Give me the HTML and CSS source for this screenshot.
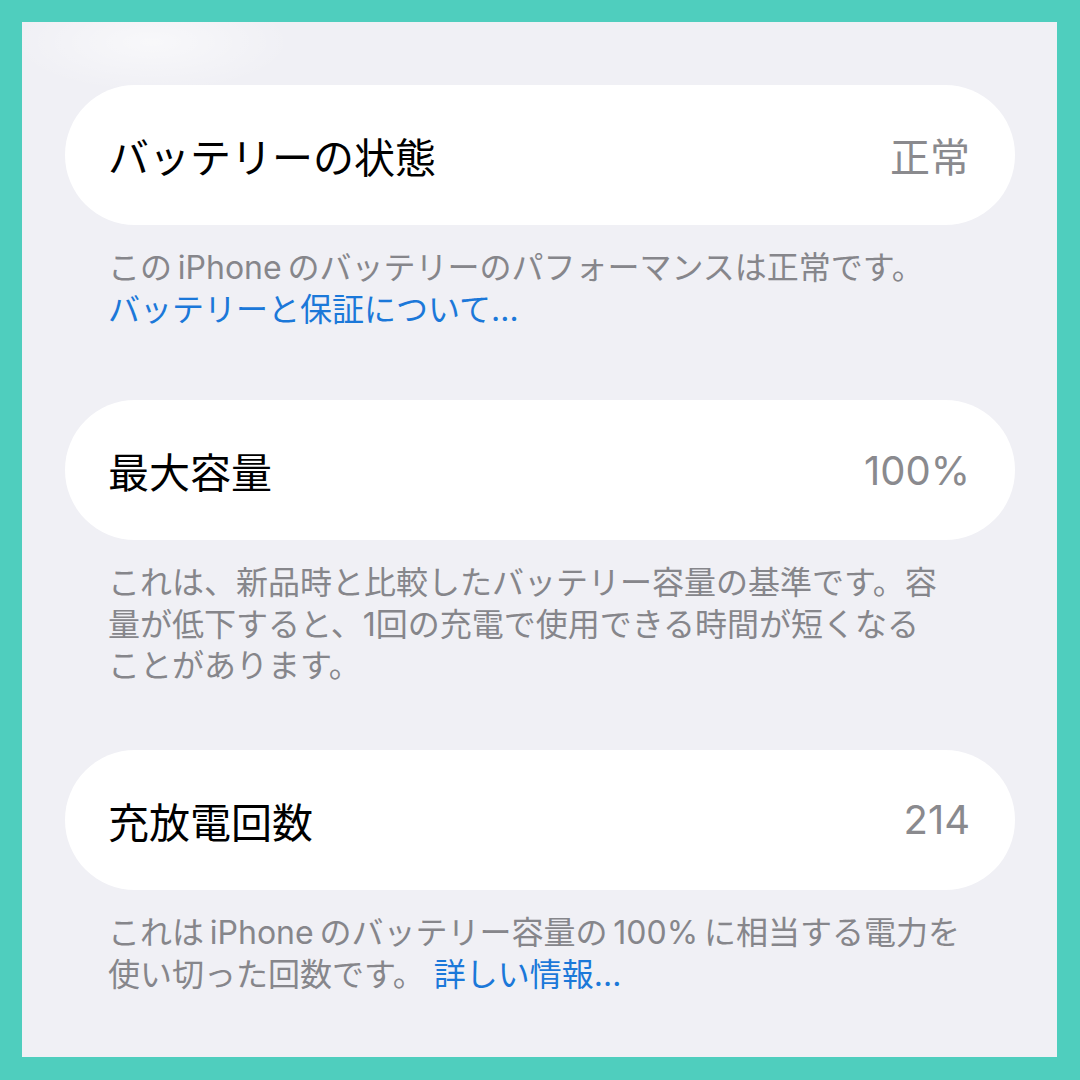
FILE: index.html
```html
<!DOCTYPE html>
<html lang="ja">
<head>
    <meta charset="UTF-8">
    <meta name="viewport" content="width=device-width, initial-scale=1.0">
    <title>バッテリーの状態</title>
    <link rel="stylesheet" href="styles.css">
</head>
<body>
    <div class="screen">
        <div class="row">
            <span class="title">バッテリーの状態</span>
            <span class="value">正常</span>
        </div>
        <p class="note short">この&thinsp;iPhone&thinsp;のバッテリーのパフォーマンスは正常です。<br><a href="#">バッテリーと保証について…</a></p>

        <div class="row">
            <span class="title">最大容量</span>
            <span class="value">100%</span>
        </div>
        <p class="note">これは、新品時と比較したバッテリー容量の基準です。容<br>量が低下すると、1回の充電で使用できる時間が短くなる<br>ことがあります。</p>

        <div class="row">
            <span class="title">充放電回数</span>
            <span class="value">214</span>
        </div>
        <p class="note">これは&thinsp;iPhone&thinsp;のバッテリー容量の&thinsp;100%&thinsp;に相当する電力を<br>使い切った回数です。 <a href="#">詳しい情報…</a></p>
    </div>
</body>
</html>
```

FILE: styles.css
```css
body {
    margin: 0;
    padding: 22px 23px 23px 22px;
    background: #4fcebe;
    font-family: Inter, "Noto Sans CJK JP", sans-serif;
}
.screen {
    height: 1035px;
    box-sizing: border-box;
    padding: 63px 42px 0 43px;
    background: radial-gradient(ellipse 140px 50px at 130px 20px, rgba(255, 255, 255, 0.55), rgba(255, 255, 255, 0)), #f0f0f5;
}
.row {
    height: 140px;
    box-sizing: border-box;
    padding: 0 45px 0 43px;
    border-radius: 70px;
    background: #fff;
    display: flex;
    justify-content: space-between;
    align-items: center;
}
.title {
    font-size: 41px;
    color: #000;
}
.value {
    font-size: 40px;
    color: #8a8a8e;
}
.note {
    margin: 22px 0 63px;
    padding-left: 43px;
    font-size: 32px;
    line-height: 41.6px;
    color: #86868b;
    white-space: nowrap;
}
.note.short {
    margin-bottom: 70px;
}
.note a {
    color: #1b78d9;
    text-decoration: none;
}
```
